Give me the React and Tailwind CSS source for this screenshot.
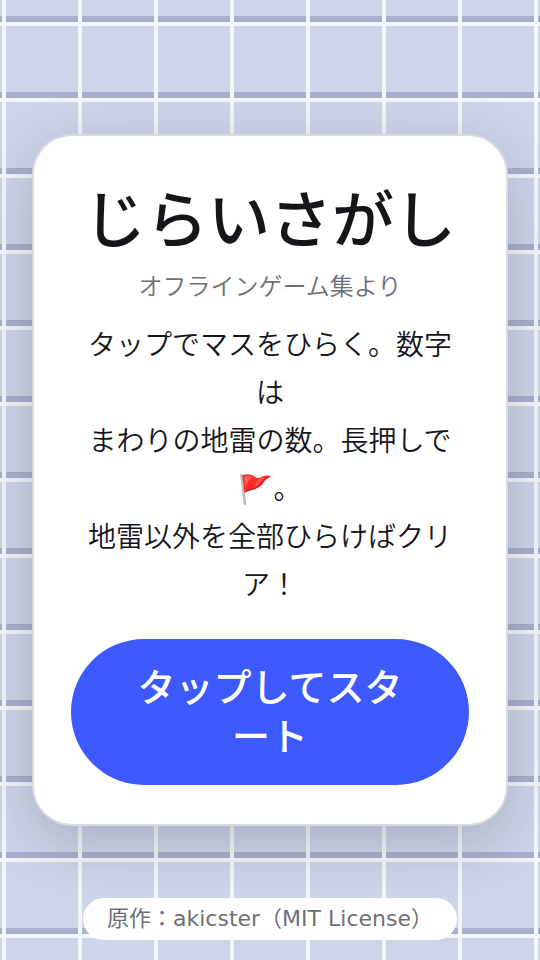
const COLS = 9;
const ROWS = 14;
const cells = Array.from({ length: COLS * ROWS }, (_, i) => i);

function Board() {
  return (
    <div className="absolute inset-0 flex items-center justify-center" aria-hidden="true">
      <div className="grid shrink-0 grid-cols-[repeat(9,72px)] auto-rows-[72px] gap-1">
        {cells.map((i) => (
          <div key={i} className="border-b-[6px] border-[#a9b0ce] bg-[#ced5ea]" />
        ))}
      </div>
    </div>
  );
}

function StartCard({ onStart }) {
  return (
    <section className="relative w-[88%] rounded-[40px] border-2 border-[#d9dae3] bg-white px-[37px] pt-10 pb-[39px] text-center shadow-[0_16px_60px_rgba(20,20,30,0.2)]">
      <h1 className="text-[62px] leading-[92px] font-medium text-[#16161a]">じらいさがし</h1>
      <p className="text-2xl leading-[38px] font-[350] text-[#6f6f78]">オフラインゲーム集より</p>
      <p className="mt-4 px-3 text-[28px] leading-[48px] font-[350] text-[#16161a]">
        タップでマスをひらく。数字は
        <br />
        まわりの地雷の数。長押しで🚩。
        <br />
        地雷以外を全部ひらけばクリア！
      </p>
      <button
        type="button"
        onClick={onStart}
        className="mt-[29px] w-full rounded-full bg-[#3d5afe] px-12 pt-[25px] pb-[23px] text-[38px] leading-[49px] font-medium text-white"
      >
        タップしてスタート
      </button>
    </section>
  );
}

export default function App() {
  return (
    <main className="relative flex min-h-screen flex-col items-center justify-center overflow-hidden bg-[#f2f6fb] font-['DejaVu_Sans','Noto_Sans_CJK_JP',sans-serif]" lang="ja">
      <Board />
      <StartCard onStart={() => {}} />
      <footer className="absolute bottom-5 rounded-full bg-white px-6 py-1 text-[22px] leading-[34px] whitespace-nowrap text-[#6f6f78]">
        原作：akicster（MIT License）
      </footer>
    </main>
  );
}
